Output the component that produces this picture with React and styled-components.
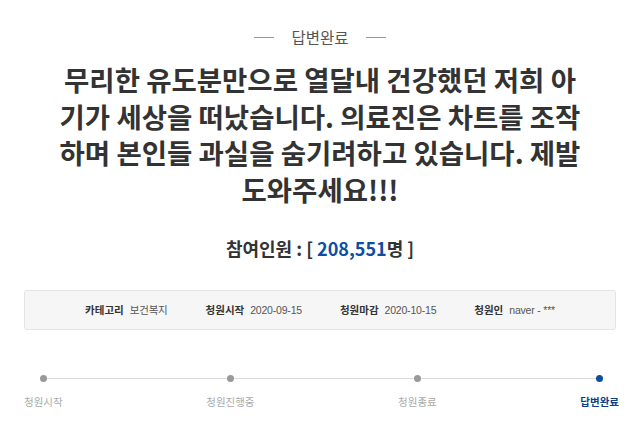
import React from "react";
import styled, { createGlobalStyle } from "styled-components";

const GlobalStyle = createGlobalStyle`
  html, body {
    margin: 0;
    padding: 0;
    background: #fff;
  }
  body {
    font-family: "Noto Sans CJK KR", "Noto Sans", sans-serif;
    color: #333;
  }
`;

const Page = styled.div`
  width: 640px;
  height: 434px;
  overflow: hidden;
  display: flex;
  flex-direction: column;
  align-items: center;
`;

const Status = styled.div`
  margin-top: 26px;
  display: flex;
  align-items: center;
  gap: 17px;
  font-size: 15.5px;
  line-height: 22px;
  color: #555;
`;

const Dash = styled.span`
  width: 20px;
  height: 1px;
  background: #999;
`;

const Title = styled.h1`
  margin: 13px 0 0;
  width: 530px;
  font-size: 27.5px;
  line-height: 36.7px;
  font-weight: 700;
  color: #333;
  text-align: center;
  word-break: normal;
`;

const Count = styled.div`
  margin-top: 27px;
  font-size: 18px;
  line-height: 26px;
  font-weight: 700;
  color: #333;
`;

const Num = styled.span`
  color: #0b4ea2;
`;

const MetaBox = styled.div`
  margin-top: 29px;
  width: 590px;
  height: 38px;
  border: 1px solid #e4e4e4;
  border-radius: 3px;
  background: #f6f6f6;
  display: flex;
  align-items: center;
  justify-content: center;
  gap: 38px;
  box-sizing: content-box;
`;

const MetaItem = styled.div`
  display: flex;
  align-items: center;
  gap: 6px;
`;

const MetaLabel = styled.span`
  font-size: 10.5px;
  font-weight: 700;
  color: #333;
`;

const MetaValue = styled.span`
  font-family: "Liberation Sans", "Noto Sans CJK KR", sans-serif;
  font-size: 10.5px;
  letter-spacing: -0.2px;
  color: #555;
`;

const Steps = styled.div`
  position: relative;
  margin-top: 45px;
  width: 640px;
  box-sizing: border-box;
  padding: 0 21px 0 24px;
  display: flex;
  justify-content: space-between;

  &::before {
    content: "";
    position: absolute;
    top: 3px;
    left: 43px;
    right: 41px;
    height: 1px;
    background: #dcdcdc;
  }
`;

const Step = styled.div`
  position: relative;
  display: flex;
  flex-direction: column;
  align-items: center;
  gap: 13px;
`;

const Dot = styled.span`
  width: 7px;
  height: 7px;
  border-radius: 50%;
  background: ${(p) => (p.active ? "#0b4ea2" : "#999")};
`;

const StepLabel = styled.span`
  font-size: 10.5px;
  line-height: 14px;
  font-weight: ${(p) => (p.active ? 700 : 400)};
  color: ${(p) => (p.active ? "#0b3f84" : "#aaa")};
`;

const meta = [
  { label: "카테고리", value: "보건복지" },
  { label: "청원시작", value: "2020-09-15" },
  { label: "청원마감", value: "2020-10-15" },
  { label: "청원인", value: "naver - ***" },
];

const steps = ["청원시작", "청원진행중", "청원종료", "답변완료"];

export default function App() {
  return (
    <>
      <GlobalStyle />
      <Page>
        <Status>
          <Dash />
          답변완료
          <Dash />
        </Status>
        <Title>
          무리한 유도분만으로 열달내 건강했던 저희 아기가 세상을 떠났습니다.
          의료진은 차트를 조작하며 본인들 과실을 숨기려하고 있습니다. 제발
          도와주세요!!!
        </Title>
        <Count>
          참여인원 : [ <Num>208,551</Num>명 ]
        </Count>
        <MetaBox>
          {meta.map((m) => (
            <MetaItem key={m.label}>
              <MetaLabel>{m.label}</MetaLabel>
              <MetaValue>{m.value}</MetaValue>
            </MetaItem>
          ))}
        </MetaBox>
        <Steps>
          {steps.map((s, i) => (
            <Step key={s}>
              <Dot active={i === steps.length - 1} />
              <StepLabel active={i === steps.length - 1}>{s}</StepLabel>
            </Step>
          ))}
        </Steps>
      </Page>
    </>
  );
}
